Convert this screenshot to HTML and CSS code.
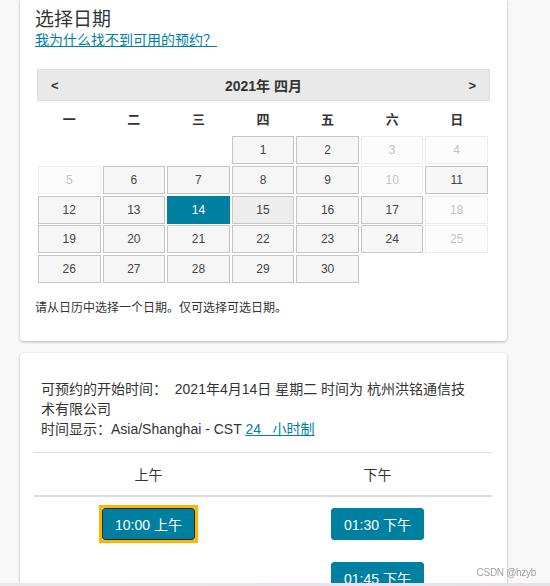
FILE: index.html
```html
<!DOCTYPE html>
<html lang="zh-CN">
<head>
<meta charset="utf-8">
<title>选择日期</title>
<link rel="stylesheet" href="styles.css">
</head>
<body>
<div class="page">
  <section class="card card-date">
    <h2 class="title">选择日期</h2>
    <a class="help-link" href="#">我为什么找不到可用的预约？</a>
    <div class="calendar">
      <div class="cal-header">
        <span class="nav">&lt;</span>
        <span class="month">2021年 四月</span>
        <span class="nav">&gt;</span>
      </div>
      <div class="weekdays">
        <span>一</span><span>二</span><span>三</span><span>四</span><span>五</span><span>六</span><span>日</span>
      </div>
      <div class="days">
        <span class="empty"></span><span class="empty"></span><span class="empty"></span>
        <span class="day">1</span><span class="day">2</span><span class="day off">3</span><span class="day off">4</span>
        <span class="day off">5</span><span class="day">6</span><span class="day">7</span><span class="day">8</span><span class="day">9</span><span class="day off">10</span><span class="day">11</span>
        <span class="day">12</span><span class="day">13</span><span class="day sel">14</span><span class="day today">15</span><span class="day">16</span><span class="day">17</span><span class="day off">18</span>
        <span class="day">19</span><span class="day">20</span><span class="day">21</span><span class="day">22</span><span class="day">23</span><span class="day">24</span><span class="day off">25</span>
        <span class="day">26</span><span class="day">27</span><span class="day">28</span><span class="day">29</span><span class="day">30</span>
      </div>
    </div>
    <p class="hint">请从日历中选择一个日期。仅可选择可选日期。</p>
  </section>

  <section class="card card-time">
    <p class="info">可预约的开始时间： &nbsp;2021年4月14日 星期二 时间为 杭州洪铭通信技术有限公司<br>时间显示：Asia/Shanghai - CST <a class="fmt-link" href="#">24&nbsp;&nbsp; 小时制</a></p>
    <div class="slot-head">
      <span>上午</span>
      <span>下午</span>
    </div>
    <div class="slot-cols">
      <div class="slot-col">
        <span class="focus-ring"><button class="slot focus" type="button">10:00 上午</button></span>
      </div>
      <div class="slot-col">
        <button class="slot" type="button">01:30 下午</button>
        <button class="slot" type="button">01:45 下午</button>
      </div>
    </div>
  </section>
</div>
<div class="watermark">CSDN @hzyb</div>
<div class="bottom-strip"></div>
</body>
</html>
```

FILE: styles.css
```css
* {
  box-sizing: border-box;
}

body {
  margin: 0;
  background: #f8f8f8;
  font-family: "Liberation Sans", "Noto Sans CJK SC", sans-serif;
  color: #333333;
}

.page {
  width: 487px;
  margin-left: 20px;
}

.card {
  background: #ffffff;
  border-radius: 4px;
  box-shadow: 0 1px 3px rgba(0, 0, 0, 0.28);
}

.card-date {
  border-radius: 0 0 4px 4px;
  height: 341px;
  padding: 9px 17px 0 15px;
}

.title {
  margin: 0;
  font-size: 19px;
  font-weight: normal;
  line-height: 22px;
  color: #333333;
}

.help-link {
  display: block;
  width: fit-content;
  font-size: 14px;
  line-height: 18px;
  color: #0080a0;
  text-decoration: underline;
}

.calendar {
  margin-top: 20px;
  padding-left: 2px;
}

.cal-header {
  height: 32px;
  background: #e9e9e9;
  border: 1px solid #dddddd;
  display: flex;
  align-items: center;
  justify-content: space-between;
  padding: 0 13px;
  font-weight: bold;
  font-size: 14px;
  color: #333333;
}

.nav {
  font-size: 13px;
}

.weekdays {
  display: grid;
  grid-template-columns: repeat(7, 1fr);
  column-gap: 2px;
  margin: 0 2px 0 1px;
  height: 35px;
  align-items: center;
  text-align: center;
  font-weight: bold;
  font-size: 13px;
  color: #333333;
}

.days {
  display: grid;
  grid-template-columns: repeat(7, 1fr);
  column-gap: 2px;
  row-gap: 1.75px;
  grid-auto-rows: 28px;
  margin: 0 2px 0 1px;
}

.day {
  border: 1px solid #c5c5c5;
  background: #f6f6f6;
  color: #454545;
  font-size: 12px;
  display: flex;
  align-items: center;
  justify-content: center;
}

.day.off {
  border-color: #ececec;
  background: #fcfcfc;
  color: #c4c4c4;
}

.day.sel {
  background: #0080a1;
  border-color: #0080a1;
  color: #ffffff;
}

.day.today {
  background: #ededed;
  border-color: #c8c8c8;
}

.hint {
  margin: 17px 0 0;
  font-size: 12px;
  line-height: 16px;
  color: #333333;
}

.card-time {
  margin-top: 12px;
  padding: 26px 15px 60px 14px;
}

.info {
  margin: 0;
  padding: 0 15px 0 7px;
  font-size: 14px;
  line-height: 20px;
  color: #333333;
}

.fmt-link {
  color: #0080a0;
  text-decoration: underline;
}

.slot-head {
  display: grid;
  grid-template-columns: 1fr 1fr;
  margin-top: 13px;
  height: 45px;
  border-top: 1px solid #dcdcdc;
  border-bottom: 2px solid #dcdcdc;
  align-items: center;
  text-align: center;
  font-size: 14px;
  color: #333333;
}

.slot-cols {
  display: grid;
  grid-template-columns: 1fr 1fr;
  padding-top: 11px;
}

.slot-col {
  display: flex;
  flex-direction: column;
  align-items: center;
  gap: 22px;
}

.focus-ring {
  display: block;
  margin-top: -3px;
  border: 3px solid #ffb400;
}

.slot {
  display: block;
  height: 32px;
  padding: 0 12px;
  min-width: 92px;
  background: #0080a1;
  color: #ffffff;
  font-family: "Liberation Sans", "Noto Sans CJK SC", sans-serif;
  font-size: 14px;
  border: 1px solid #0080a1;
  border-radius: 3px;
}

.slot.focus {
  border-color: #2a2a2a;
}

.watermark {
  position: fixed;
  right: 14px;
  bottom: 8px;
  font-size: 10px;
  color: #a0a0a0;
  letter-spacing: -0.3px;
}

.bottom-strip {
  position: fixed;
  left: 0;
  right: 0;
  bottom: 0;
  height: 3px;
  background: linear-gradient(90deg, #f3e5ea, #e4e1ee);
}
```
